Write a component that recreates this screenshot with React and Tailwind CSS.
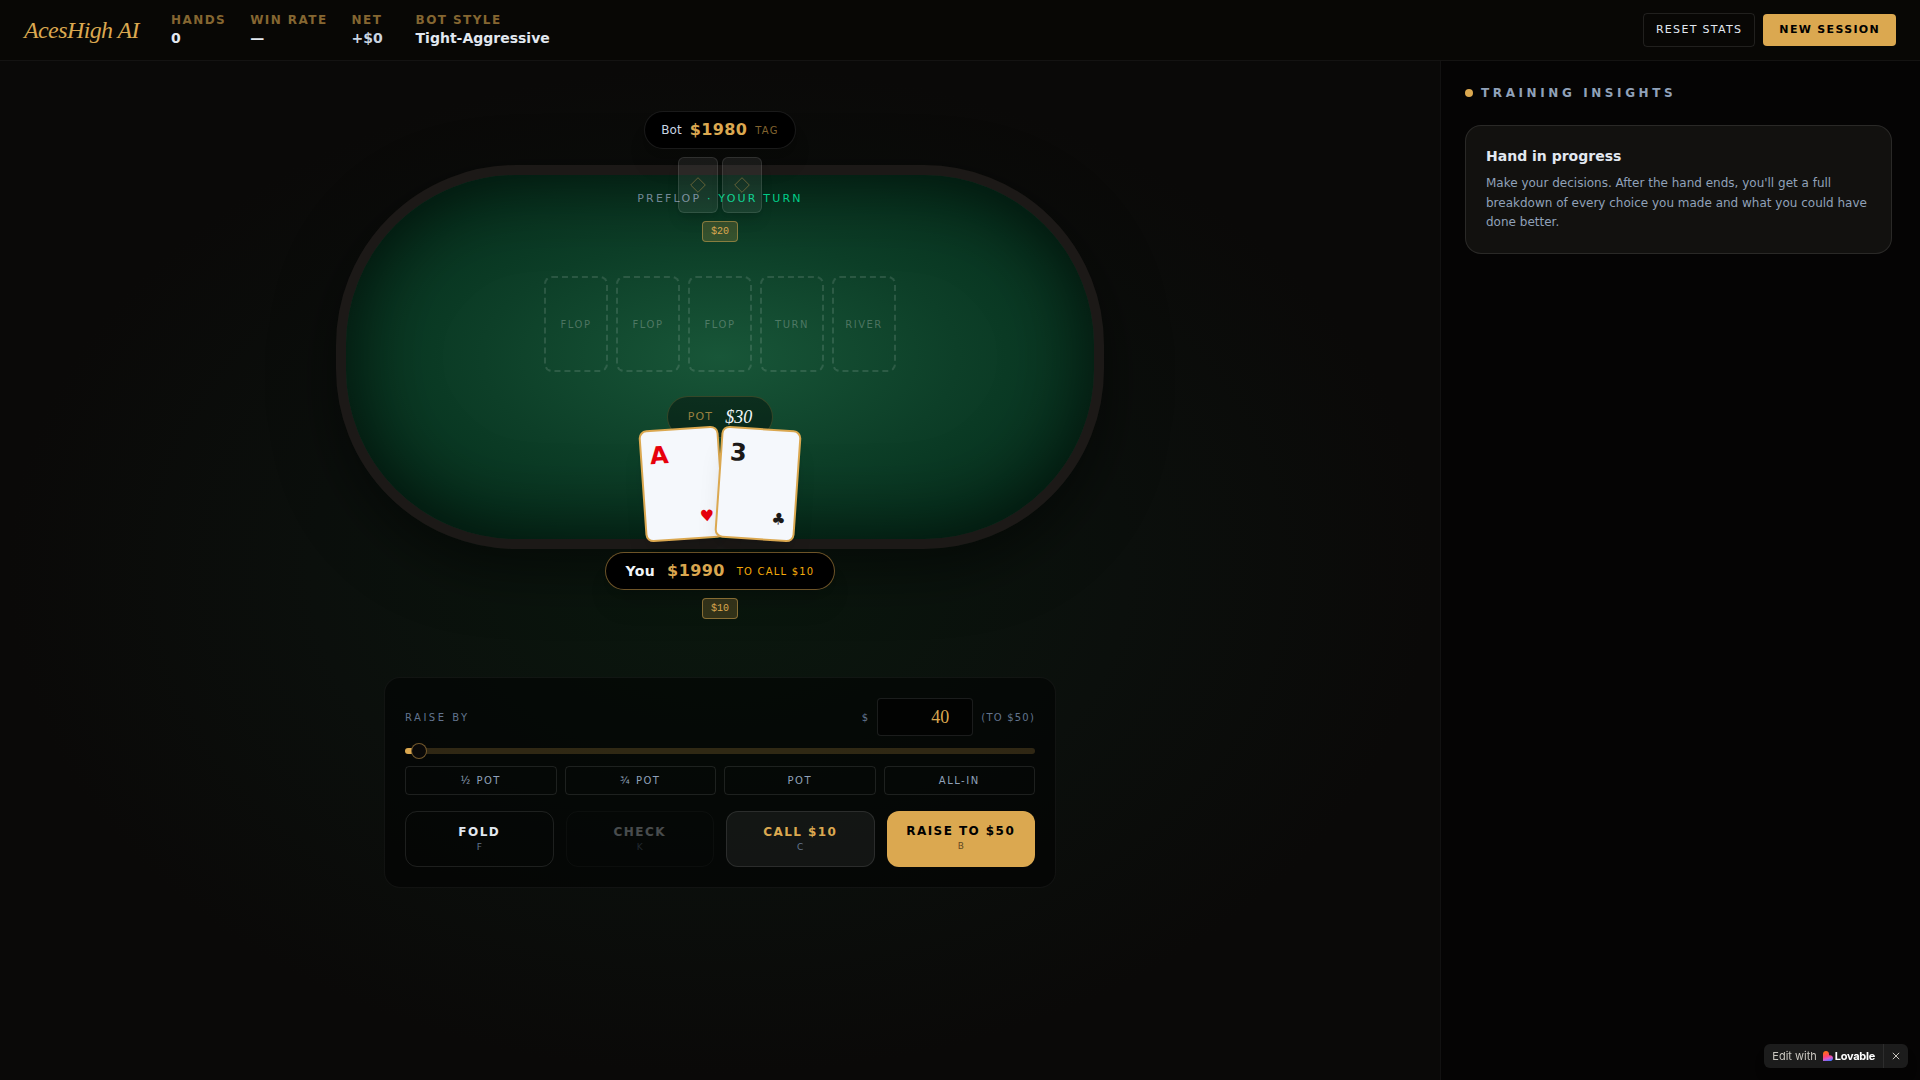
import { useState } from "react";

const MIN_RAISE = 20;
const MAX_RAISE = 1990;

const stats = [
  { label: "Hands", value: "0" },
  { label: "Win Rate", value: "—" },
  { label: "Net", value: "+$0", tone: "text-slate-300" },
  { label: "Bot Style", value: "Tight-Aggressive" }
];

const boardSlots = ["Flop", "Flop", "Flop", "Turn", "River"];

const presets = [
  { label: "½ Pot", amount: 20 },
  { label: "¾ Pot", amount: 30 },
  { label: "Pot", amount: 40 },
  { label: "All-in", amount: MAX_RAISE }
];

function Header() {
  return (
    <header className="flex items-center justify-between border-b border-white/5 bg-[#080705] px-6 py-3">
      <div className="flex items-center gap-8">
        <h1 className="font-['Liberation_Serif',serif] text-2xl leading-8 tracking-tight text-[#dba850] italic">AcesHigh AI</h1>
        <dl className="flex gap-6">
          {stats.map((stat) => (
            <div key={stat.label} className="min-w-10">
              <dt className="text-xs font-bold tracking-[0.12em] text-[#dba850]/60 uppercase">{stat.label}</dt>
              <dd className={`text-sm font-bold ${stat.tone || "text-slate-200"}`}>{stat.value}</dd>
            </div>
          ))}
        </dl>
      </div>
      <div className="flex items-center gap-2">
        <button className="rounded border border-white/10 px-3 py-2 text-[11px] leading-4 tracking-[0.12em] text-slate-200 uppercase">
          Reset Stats
        </button>
        <button className="rounded bg-[#dba850] px-4 py-2 text-[11px] leading-4 font-bold tracking-[0.12em] text-black uppercase">
          New Session
        </button>
      </div>
    </header>
  );
}

function BetChip({ amount }) {
  return (
    <span className="rounded border border-[#dba850]/50 bg-[#dba850]/20 px-2 py-0.5 font-['Liberation_Mono',monospace] text-[10px] leading-[15px] text-[#dba850]">
      ${amount}
    </span>
  );
}

function CardBack() {
  return (
    <div className="flex h-14 w-10 items-center justify-center rounded-md border border-white/10 bg-white/7 shadow-lg">
      <svg viewBox="0 0 16 16" className="size-4 stroke-[#dba850]/40" fill="none">
        <path d="M8 0.700L15.300 8L8 15.300L0.700 8Z" />
      </svg>
    </div>
  );
}

function PlayerCard({ rank, suit, className }) {
  return (
    <div className={`flex h-28 w-20 flex-col justify-between rounded-lg border-2 border-[#dba850] bg-[#f5f8fc] p-2 shadow-xl ${className}`}>
      <span className="text-2xl leading-8 font-bold">{rank}</span>
      <span className="text-right text-base leading-6">{suit}</span>
    </div>
  );
}

function PokerTable() {
  return (
    <div className="relative flex aspect-[2/1] w-full max-w-3xl flex-col items-center justify-center gap-6 rounded-[180px] border-10 border-stone-900 bg-[radial-gradient(ellipse_at_center,#185638_0%,#0d3f28_45%,#06301d_80%)] shadow-[inset_0_0_80px_rgba(0,0,0,0.7),0_20px_60px_rgba(0,0,0,0.5)]">
      <p className="absolute top-4 text-[11px] leading-4 tracking-[0.2em] text-slate-400/80 uppercase">
        Preflop <span className="text-[#00cf8a]">· Your turn</span>
      </p>

      <div className="flex gap-2">
        {boardSlots.map((slot, index) => (
          <div
            key={index}
            className="flex h-24 w-16 items-center justify-center rounded-lg border-2 border-dashed border-white/12 text-[10px] tracking-[0.15em] text-white/25 uppercase"
          >
            {slot}
          </div>
        ))}
      </div>
      <div className="flex items-center gap-3 rounded-full border border-[#dba850]/20 bg-black/40 px-5 py-1.5">
        <span className="text-[11px] tracking-[0.1em] text-[#dba850]/70 uppercase">Pot</span>
        <span className="font-['Liberation_Serif',serif] text-lg leading-7 text-slate-100 italic">$30</span>
      </div>

      <div className="absolute -top-16 flex flex-col items-center gap-2">
        <div className="flex items-center gap-2 rounded-full border border-white/10 bg-black px-4 py-1.5 shadow-xl">
          <span className="text-xs text-slate-300">Bot</span>
          <span className="text-base font-bold tracking-wide text-[#dba850]">$1980</span>
          <span className="text-[10px] tracking-[0.12em] text-[#dba850]/60 uppercase">Tag</span>
        </div>
        <div className="flex gap-1">
          <CardBack />
          <CardBack />
        </div>
        <BetChip amount={20} />
      </div>

      <div className="absolute -bottom-20 flex flex-col items-center gap-2">
        <div className="mb-1 flex -space-x-1">
          <PlayerCard rank="A" suit="♥" className="-rotate-4 text-red-600" />
          <PlayerCard rank="3" suit="♣" className="rotate-4 text-stone-900" />
        </div>
        <div className="flex items-center gap-3 rounded-full border border-[#dba850]/50 bg-black px-5 py-1.5 shadow-xl">
          <span className="text-sm font-bold tracking-wide text-slate-100">You</span>
          <span className="text-base font-bold tracking-wide text-[#dba850]">$1990</span>
          <span className="text-[10px] tracking-[0.12em] text-[#f5ab0b] uppercase">To call $10</span>
        </div>
        <BetChip amount={10} />
      </div>
    </div>
  );
}

function ActionButton({ label, hotkey, className, keyClass = "text-slate-500", disabled }) {
  return (
    <button disabled={disabled} className={`flex flex-col items-center rounded-xl py-3 uppercase ${className}`}>
      <span className="text-xs font-bold tracking-[0.12em]">{label}</span>
      <span className={`text-[9px] leading-[14px] ${keyClass}`}>{hotkey}</span>
    </button>
  );
}

function RaisePanel() {
  const [raise, setRaise] = useState(40);

  // centre of the 16px thumb, measured along the track
  const ratio = (raise - MIN_RAISE) / (MAX_RAISE - MIN_RAISE);
  const fill = `calc(8px + (100% - 16px) * ${ratio})`;

  const update = (event) => setRaise(Number(event.target.value));

  return (
    <section className="mt-32 w-full max-w-2xl rounded-2xl border border-white/5 bg-black/50 p-5">
      <div className="flex items-center justify-between">
        <label htmlFor="raise" className="text-[10px] tracking-[0.25em] text-slate-500 uppercase">
          Raise by
        </label>
        <div className="flex items-center gap-2 text-[10px] tracking-[0.12em] text-slate-500">
          <span>$</span>
          <input
            id="raise"
            type="number"
            value={raise}
            onChange={update}
            className="w-24 rounded border border-white/10 bg-black/60 px-2 py-1 text-right font-['Liberation_Serif',serif] text-lg leading-7 tracking-normal text-[#dba850]"
          />
          <span>(TO ${raise + 10})</span>
        </div>
      </div>

      <input
        type="range"
        aria-label="Raise amount"
        min={MIN_RAISE}
        max={MAX_RAISE}
        value={raise}
        onChange={update}
        style={{ backgroundImage: `linear-gradient(to right, #dba850 ${fill}, transparent ${fill})` }}
        className="mt-3 block h-1.5 w-full appearance-none rounded-full bg-[#dba850]/20 [&::-webkit-slider-thumb]:size-4 [&::-webkit-slider-thumb]:appearance-none [&::-webkit-slider-thumb]:rounded-full [&::-webkit-slider-thumb]:border [&::-webkit-slider-thumb]:border-[#dba850]/50 [&::-webkit-slider-thumb]:bg-[#0a0908]"
      />

      <div className="mt-3 grid grid-cols-4 gap-2">
        {presets.map((preset) => (
          <button
            key={preset.label}
            onClick={() => setRaise(preset.amount)}
            className="rounded border border-white/10 py-1.5 text-[10px] leading-[15px] tracking-[0.15em] text-slate-400 uppercase"
          >
            {preset.label}
          </button>
        ))}
      </div>

      <div className="mt-4 grid grid-cols-4 gap-3">
        <ActionButton label="Fold" hotkey="F" className="border border-white/10 text-slate-200" />
        <ActionButton label="Check" hotkey="K" disabled className="border border-white/10 text-slate-200 opacity-30" />
        <ActionButton label="Call $10" hotkey="C" className="border border-white/10 bg-white/6 text-[#dba850]" />
        <ActionButton label={`Raise to $${raise + 10}`} hotkey="B" keyClass="text-black/60" className="bg-[#dba850] text-black" />
      </div>
    </section>
  );
}

function Insights() {
  return (
    <aside className="w-[480px] shrink-0 border-l border-white/5 bg-black/50 py-6 pr-7 pl-6">
      <h2 className="flex items-center gap-2 text-xs font-bold tracking-[0.3em] text-slate-400 uppercase">
        <span className="size-2 rounded-full bg-[#dba850]" />
        Training Insights
      </h2>
      <article className="mt-6 rounded-2xl border border-white/10 bg-[#12110f] p-5">
        <h3 className="text-sm font-bold text-slate-200">Hand in progress</h3>
        <p className="mt-2 text-xs leading-relaxed text-slate-400">
          Make your decisions. After the hand ends, you'll get a full breakdown of every choice you made and what you could have done better.
        </p>
      </article>
    </aside>
  );
}

function LovableBadge() {
  return (
    <div className="fixed right-3 bottom-3 flex h-6 items-center rounded-md bg-[#1c1c1c] font-['Inter',sans-serif] text-[11px] shadow-lg">
      <a href="#lovable" className="flex items-center pr-2 pl-2 text-[#c9c6bf]">
        Edit with
        <svg viewBox="0 0 24 24" className="mr-0.5 ml-1.5 size-[10px]">
          <defs>
            <linearGradient id="lovableHeart" x1="0.3" y1="0" x2="0.6" y2="1">
              <stop offset="0.1" stopColor="#ff6a1f" />
              <stop offset="0.5" stopColor="#ff4470" />
              <stop offset="0.75" stopColor="#d45ad0" />
              <stop offset="1" stopColor="#4b73ff" />
            </linearGradient>
          </defs>
          <path
            fill="url(#lovableHeart)"
            d="M7.2 0c4 0 7.2 3.200 7.200 7.200v2.700h2.400c4 0 7.200 3.200 7.200 7.200S20.800 24 16.800 24H0V7.200C0 3.200 3.200 0 7.200 0Z"
          />
        </svg>
        <span className="font-bold tracking-tight text-white">Lovable</span>
      </a>
      <button aria-label="Close badge" className="flex h-full items-center border-l border-white/8 px-2 text-[#c9c6bf]">
        <svg viewBox="0 0 8 8" className="size-2 stroke-current" fill="none">
          <path d="M0.800 0.800l6.400 6.400M7.200 0.800l-6.400 6.400" />
        </svg>
      </button>
    </div>
  );
}

export default function App() {
  return (
    <div className="flex min-h-screen flex-col bg-[#0a0908] font-['DejaVu_Sans',sans-serif] text-slate-200">
      <Header />
      <div className="flex flex-1">
        <main className="flex flex-1 flex-col items-center bg-[radial-gradient(ellipse_at_center,#0a180e_0%,#0b0f0c_40%,#0a0908_70%)] px-6 pt-26 pb-8">
          <PokerTable />
          <RaisePanel />
        </main>
        <Insights />
      </div>
      <LovableBadge />
    </div>
  );
}
